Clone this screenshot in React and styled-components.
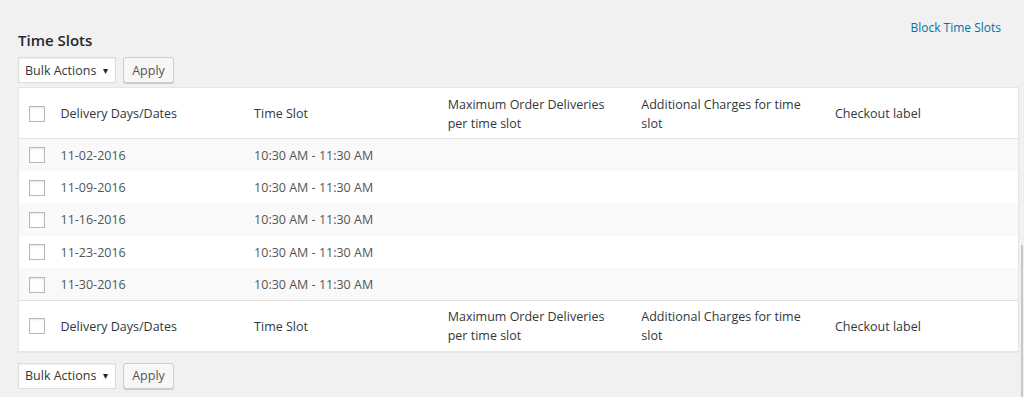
import React from 'react';
import styled, { createGlobalStyle } from 'styled-components';

const GlobalStyle = createGlobalStyle`
  html, body {
    margin: 0;
    padding: 0;
    background: #f1f1f1;
  }
  body {
    font-family: "Open Sans", "Noto Sans", sans-serif;
    font-size: 13px;
    color: #555;
  }
`;

const Page = styled.div`
  position: relative;
  height: 397px;
  overflow: hidden;
  padding: 0 5px 0 18px;
  box-sizing: border-box;
`;

const TopBar = styled.div`
  display: flex;
  justify-content: space-between;
  align-items: flex-start;
  height: 57px;
`;

const Title = styled.h2`
  margin: 30px 0 0;
  font-size: 15px;
  font-weight: 600;
  color: #23282d;
  line-height: 20px;
`;

const Link = styled.a`
  margin: 19px 18px 0 0;
  color: #0073aa;
  text-decoration: none;
  font-size: 12px;
  line-height: 18px;
`;

const Toolbar = styled.div`
  display: flex;
  gap: 7px;
  height: 26px;
  margin-bottom: ${p => p.$bottom ? 0 : '4px'};
  margin-top: ${p => p.$bottom ? '11px' : 0};
`;

const Select = styled.div`
  width: 98px;
  height: 26px;
  box-sizing: border-box;
  background: #fff;
  border: 1px solid #ddd;
  box-shadow: inset 0 1px 2px rgba(0,0,0,.07);
  display: flex;
  align-items: center;
  justify-content: space-between;
  padding: 0 7px 0 6px;
  font-size: 12.5px;
  color: #32373c;
`;

const Caret = styled.span`
  font-size: 10px;
  color: #222;
  font-family: "DejaVu Sans", sans-serif;
`;

const Button = styled.button`
  width: 51px;
  height: 26px;
  background: #f7f7f7;
  border: 1px solid #ccc;
  border-radius: 3px;
  box-shadow: 0 1px 0 #ccc;
  font-family: inherit;
  font-size: 12.5px;
  color: #555;
  padding: 0;
`;

const Table = styled.table`
  width: 1001px;
  border-collapse: collapse;
  table-layout: fixed;
  background: #fff;
  border: 1px solid #e5e5e5;
  box-shadow: 0 1px 1px rgba(0,0,0,.04);
`;

const HeadRow = styled.tr`
  height: 51px;
  border-bottom: ${p => p.$foot ? 'none' : '1px solid #e1e1e1'};
  border-top: ${p => p.$foot ? '1px solid #e1e1e1' : 'none'};
`;

const Th = styled.th`
  text-align: left;
  font-weight: 400;
  font-size: 12.5px;
  line-height: 19px;
  color: #32373c;
  padding: 1px 10px 0;
  vertical-align: middle;
  box-sizing: border-box;
`;

const CheckTh = styled.th`
  padding: 1px 0 0 10px;
  text-align: left;
  vertical-align: middle;
`;

const Row = styled.tr`
  height: 32.4px;
  background: ${p => p.$alt ? '#f9f9f9' : '#fff'};
`;

const Td = styled.td`
  padding: 1px 10px 0;
  font-size: 12.5px;
  color: #555;
  vertical-align: middle;
  white-space: nowrap;
`;

const CheckTd = styled.td`
  padding: 1px 0 0 10px;
  vertical-align: middle;
`;

const Box = styled.span`
  display: block;
  width: 16px;
  height: 16px;
  box-sizing: border-box;
  border: 1px solid #b4b9be;
  background: #fff;
  box-shadow: inset 0 1px 2px rgba(0,0,0,.1);
`;

const ScrollEdge = styled.div`
  position: absolute;
  left: 1021px;
  top: 245px;
  width: 2px;
  height: 152px;
  background: #c8c8c8;
`;

const headers = [
  'Delivery Days/Dates',
  'Time Slot',
  'Maximum Order Deliveries per time slot',
  'Additional Charges for time slot',
  'Checkout label',
];

const slots = [
  { date: '11-02-2016', time: '10:30 AM - 11:30 AM' },
  { date: '11-09-2016', time: '10:30 AM - 11:30 AM' },
  { date: '11-16-2016', time: '10:30 AM - 11:30 AM' },
  { date: '11-23-2016', time: '10:30 AM - 11:30 AM' },
  { date: '11-30-2016', time: '10:30 AM - 11:30 AM' },
];

function Bulk({ bottom }) {
  return (
    <Toolbar $bottom={bottom}>
      <Select>
        <span>Bulk Actions</span>
        <Caret>▾</Caret>
      </Select>
      <Button>Apply</Button>
    </Toolbar>
  );
}

function Header({ foot }) {
  return (
    <HeadRow $foot={foot}>
      <CheckTh><Box /></CheckTh>
      {headers.map(h => <Th key={h}>{h}</Th>)}
    </HeadRow>
  );
}

export default function App() {
  return (
    <>
      <GlobalStyle />
      <Page>
        <TopBar>
          <Title>Time Slots</Title>
          <Link href="#">Block Time Slots</Link>
        </TopBar>
        <Bulk />
        <Table>
          <colgroup>
            <col style={{ width: 32 }} />
            <col /><col /><col /><col /><col />
          </colgroup>
          <thead>
            <Header />
          </thead>
          <tbody>
            {slots.map((s, i) => (
              <Row key={s.date} $alt={i % 2 === 0}>
                <CheckTd><Box /></CheckTd>
                <Td>{s.date}</Td>
                <Td>{s.time}</Td>
                <Td />
                <Td />
                <Td />
              </Row>
            ))}
          </tbody>
          <tfoot>
            <Header foot />
          </tfoot>
        </Table>
        <Bulk bottom />
        <ScrollEdge />
      </Page>
    </>
  );
}
